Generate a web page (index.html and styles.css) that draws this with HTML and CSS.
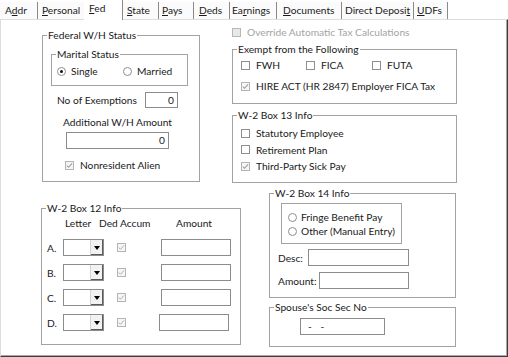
FILE: index.html
```html
<!DOCTYPE html>
<html>
<head>
<meta charset="utf-8">
<link rel="stylesheet" href="styles.css">
</head>
<body>
<div class="tabs">
  <div class="tab t-addr">A<u>d</u>dr</div>
  <div class="tab t-personal"><u>P</u>ersonal</div>
  <div class="tab t-fed active"><u>F</u>ed</div>
  <div class="tab t-state"><u>S</u>tate</div>
  <div class="tab t-pays"><u>P</u>ays</div>
  <div class="tab t-deds"><u>D</u>eds</div>
  <div class="tab t-earn">Ea<u>r</u>nings</div>
  <div class="tab t-docs"><u>D</u>ocuments</div>
  <div class="tab t-dd">Direct Deposi<u>t</u></div>
  <div class="tab t-udf"><u>U</u>DFs</div>
</div>
<div class="panel">
  <div class="row row1">
    <fieldset class="grp fedwh">
      <legend>Federal W/H Status</legend>
      <fieldset class="grp marital">
        <legend>Marital Status</legend>
        <div class="radios">
          <div class="opt single"><span class="rb on"></span>Single</div>
          <div class="opt"><span class="rb"></span>Married</div>
        </div>
      </fieldset>
      <div class="exemptions">
        <span class="ex-label">No of Exemptions</span>
        <span class="tb num w-ex">0</span>
      </div>
      <div class="addl-label">Additional W/H Amount</div>
      <div class="tb num w-addl">0</div>
      <div class="opt nra"><span class="cb dis"><svg viewBox="0 0 9 9" width="7" height="7"><polyline points="1,4.5 3.2,6.8 7.8,1.8" fill="none" stroke="#9a9a9a" stroke-width="1.3"/></svg></span>Nonresident Alien</div>
    </fieldset>
    <div class="col right1">
      <div class="opt override"><span class="cb off-dis"></span>Override Automatic Tax Calculations</div>
      <fieldset class="grp exempt">
        <legend>Exempt from the Following</legend>
        <div class="three">
          <div class="opt"><span class="cb"></span>FWH</div>
          <div class="opt"><span class="cb"></span>FICA</div>
          <div class="opt"><span class="cb"></span>FUTA</div>
        </div>
        <div class="opt hire"><span class="cb dis"><svg viewBox="0 0 9 9" width="7" height="7"><polyline points="1,4.5 3.2,6.8 7.8,1.8" fill="none" stroke="#9a9a9a" stroke-width="1.3"/></svg></span>HIRE ACT (HR 2847) Employer FICA Tax</div>
      </fieldset>
      <fieldset class="grp box13">
        <legend>W-2 Box 13 Info</legend>
        <div class="list">
          <div class="opt li"><span class="cb"></span>Statutory Employee</div>
          <div class="opt li"><span class="cb"></span>Retirement Plan</div>
          <div class="opt li"><span class="cb dis"><svg viewBox="0 0 9 9" width="7" height="7"><polyline points="1,4.5 3.2,6.8 7.8,1.8" fill="none" stroke="#9a9a9a" stroke-width="1.3"/></svg></span>Third-Party Sick Pay</div>
        </div>
      </fieldset>
    </div>
  </div>
  <div class="row row2">
    <fieldset class="grp box12">
      <legend>W-2 Box 12 Info</legend>
      <div class="b12-head">
        <span class="h-letter">Letter</span>
        <span class="h-ded">Ded Accum</span>
        <span class="h-amt">Amount</span>
      </div>
      <div class="b12-rows">
        <div class="b12-row">
          <span class="rl">A.</span>
          <span class="dd"><span class="dd-btn"><span class="tri"></span></span></span>
          <span class="cbcell"><span class="cb dis"><svg viewBox="0 0 9 9" width="7" height="7"><polyline points="1,4.5 3.2,6.8 7.8,1.8" fill="none" stroke="#a8a8a8" stroke-width="1.2"/></svg></span></span>
          <span class="tb w-amt"></span>
        </div>
        <div class="b12-row">
          <span class="rl">B.</span>
          <span class="dd"><span class="dd-btn"><span class="tri"></span></span></span>
          <span class="cbcell"><span class="cb dis"><svg viewBox="0 0 9 9" width="7" height="7"><polyline points="1,4.5 3.2,6.8 7.8,1.8" fill="none" stroke="#a8a8a8" stroke-width="1.2"/></svg></span></span>
          <span class="tb w-amt"></span>
        </div>
        <div class="b12-row">
          <span class="rl">C.</span>
          <span class="dd"><span class="dd-btn"><span class="tri"></span></span></span>
          <span class="cbcell"><span class="cb dis"><svg viewBox="0 0 9 9" width="7" height="7"><polyline points="1,4.5 3.2,6.8 7.8,1.8" fill="none" stroke="#a8a8a8" stroke-width="1.2"/></svg></span></span>
          <span class="tb w-amt"></span>
        </div>
        <div class="b12-row">
          <span class="rl">D.</span>
          <span class="dd"><span class="dd-btn"><span class="tri"></span></span></span>
          <span class="cbcell"><span class="cb dis"><svg viewBox="0 0 9 9" width="7" height="7"><polyline points="1,4.5 3.2,6.8 7.8,1.8" fill="none" stroke="#a8a8a8" stroke-width="1.2"/></svg></span></span>
          <span class="tb w-amt shift"></span>
        </div>
      </div>
    </fieldset>
    <div class="col right2">
      <fieldset class="grp box14">
        <legend>W-2 Box 14 Info</legend>
        <div class="inner">
          <div class="opt ir"><span class="rb"></span>Fringe Benefit Pay</div>
          <div class="opt ir"><span class="rb"></span>Other (Manual Entry)</div>
        </div>
        <div class="frow desc"><span class="fl fl-desc">Desc:</span><span class="tb w-desc"></span></div>
        <div class="frow amt"><span class="fl fl-amt">Amount:</span><span class="tb w-amt14"></span></div>
      </fieldset>
      <fieldset class="grp spouse">
        <legend>Spouse's Soc Sec No</legend>
        <div class="tb w-ssn">- -</div>
      </fieldset>
    </div>
  </div>
</div>
</body>
</html>
```
FILE: styles.css
```css
* { box-sizing: border-box; }
html, body { margin: 0; padding: 0; }
body {
  width: 508px;
  height: 357px;
  overflow: hidden;
  background: #ffffff;
  font-family: Lato, "Open Sans", sans-serif;
  font-size: 10.2px;
  color: #1a1a1a;
}
u { text-decoration: underline; text-underline-offset: 1px; }

/* tabs */
.tabs { display: flex; height: 19px; }
.tab {
  height: 17px;
  margin-top: 2px;
  padding-left: 4px;
  line-height: 16px;
  white-space: nowrap;
  border-right: 1px solid #8a8a8a;
  background: #fbfbfb;
}
.tab.active {
  height: 20px;
  margin-top: 0;
  line-height: 17px;
  background: #ffffff;
  position: relative;
  z-index: 1;
  margin-bottom: -1px;
}
.t-addr { width: 38px; padding-left: 5px; }
.t-personal { width: 46px; border-right: none; }
.t-fed { width: 39px; padding-left: 5px; }
.t-state { width: 36px; }
.t-pays { width: 35px; padding-left: 3px; }
.t-deds { width: 36px; padding-left: 5px; }
.t-earn { width: 47px; padding-left: 2px; }
.t-docs { width: 65px; padding-left: 6px; }
.t-dd { width: 72px; padding-left: 3px; }
.t-udf { width: 34px; padding-left: 3px; }

/* panel */
.panel {
  height: 338px;
  border: 1px solid;
  border-color: #dcdcdc #3c3c3c #3c3c3c #dcdcdc;
  box-shadow: inset -1px -1px 0 #a8a8a8;
  background: #ffffff;
}
.row { display: flex; }
.row1 { height: 163px; }

/* group boxes */
.grp {
  margin: 0;
  padding: 0;
  min-width: 0;
  border: 1px solid #a2a2a2;
}
.grp > legend {
  padding: 0 1px;
  margin-left: 4px;
  height: 14px;
  line-height: 14px;
  white-space: nowrap;
}

/* generic option (checkbox / radio + label) */
.opt { display: flex; align-items: center; height: 14px; white-space: nowrap; }
.cb {
  flex: none;
  width: 9px;
  height: 9px;
  margin-right: 6px;
  border: 1px solid #8e8e8e;
  background: #ffffff;
  display: inline-flex;
  align-items: center;
  justify-content: center;
}
.cb.dis { border-color: #b4b4b4; background: #f6f6f6; }
.cb.off-dis { border-color: #b8b8b8; background: #e8e8e8; }
.rb {
  flex: none;
  width: 9px;
  height: 9px;
  margin-right: 5px;
  border: 1px solid #8e8e8e;
  border-radius: 50%;
  background: #ffffff;
  display: inline-flex;
  align-items: center;
  justify-content: center;
}
.rb.on::after {
  content: "";
  width: 3px;
  height: 3px;
  border-radius: 50%;
  background: #111;
}

/* text boxes */
.tb {
  display: block;
  height: 17px;
  border: 1px solid #8c8c8c;
  background: #ffffff;
  line-height: 15px;
  white-space: nowrap;
}
.tb.num { text-align: right; padding-right: 3px; }

/* Federal W/H */
.fedwh { margin: 8px 0 0 41px; width: 158px; height: 154px; }
.marital { margin: 5px 0 0 8px; width: 137px; height: 39px; }
.radios { display: flex; margin-top: 3px; padding-left: 5px; }
.radios .single { width: 66px; }
.exemptions { display: flex; align-items: center; margin-top: 6px; height: 16px; }
.ex-label { width: 102px; padding-left: 14px; white-space: nowrap; }
.w-ex { width: 33px; height: 16px; line-height: 14px; }
.addl-label { margin-top: 7px; height: 14px; line-height: 14px; padding-left: 20px; white-space: nowrap; }
.w-addl { margin: 3px 0 0 23px; width: 103px; }
.nra { margin: 9px 0 0 22px; }

/* right column, top */
.right1 { margin-left: 32px; width: 225px; }
.override { margin-top: 5px; color: #a3a3a3; }
.exempt { margin-top: 3px; height: 62px; }
.three { display: grid; grid-template-columns: 65px 66px auto; margin-top: 2px; padding-left: 8px; }
.hire { margin: 7px 0 0 8px; }
.box13 { margin-top: 4px; height: 75px; }
.list { margin-top: 3px; padding-left: 8px; }
.list .li { height: 16.5px; }

/* Box 12 */
.box12 { margin: 18px 0 0 40px; width: 200px; height: 144px; }
.b12-head { display: flex; margin-top: 1px; height: 14px; line-height: 14px; white-space: nowrap; }
.h-letter { margin-left: 23px; width: 34px; }
.h-ded { width: 77px; }
.b12-rows { display: flex; flex-direction: column; gap: 8px; margin-top: 9px; }
.b12-row { display: grid; grid-template-columns: 21px 41px 57px 70px; height: 17px; align-items: center; }
.rl { padding-left: 5px; }
.dd {
  display: flex;
  justify-content: flex-end;
  height: 17px;
  border: 1px solid #8c8c8c;
  background: #ffffff;
}
.dd-btn {
  width: 13px;
  height: 100%;
  background: #f2f2f2;
  border-left: 1px solid #d4d4d4;
  box-shadow: inset -1px -1px 0 #5a5a5a;
  display: flex;
  align-items: center;
  justify-content: center;
}
.tri {
  width: 0;
  height: 0;
  border-left: 3.5px solid transparent;
  border-right: 3.5px solid transparent;
  border-top: 4px solid #000;
  margin-right: 1px;
}
.cbcell { padding-left: 13px; display: flex; align-items: center; }
.w-amt { width: 70px; }
.w-amt.shift { margin-left: -2px; }

/* right column, bottom */
.right2 { margin-left: 28px; width: 187px; }
.box14 { margin-top: 3px; height: 112px; }
.inner {
  margin: 3px 0 0 11px;
  width: 121px;
  height: 41px;
  border: 1px solid #a2a2a2;
  padding: 6px 0 0 6px;
}
.inner .rb { margin-right: 4px; }
.frow { display: flex; align-items: center; margin-left: 8px; height: 17px; }
.desc { margin-top: 5px; }
.amt { margin-top: 6px; }
.fl { white-space: nowrap; }
.fl-desc { width: 30px; }
.fl-amt { width: 41px; }
.w-desc { width: 101px; }
.w-amt14 { width: 90px; }
.spouse { margin-top: 2px; height: 47px; }
.w-ssn { margin: 4px 0 0 30px; width: 85px; padding-left: 7px; word-spacing: 6px; }
```
